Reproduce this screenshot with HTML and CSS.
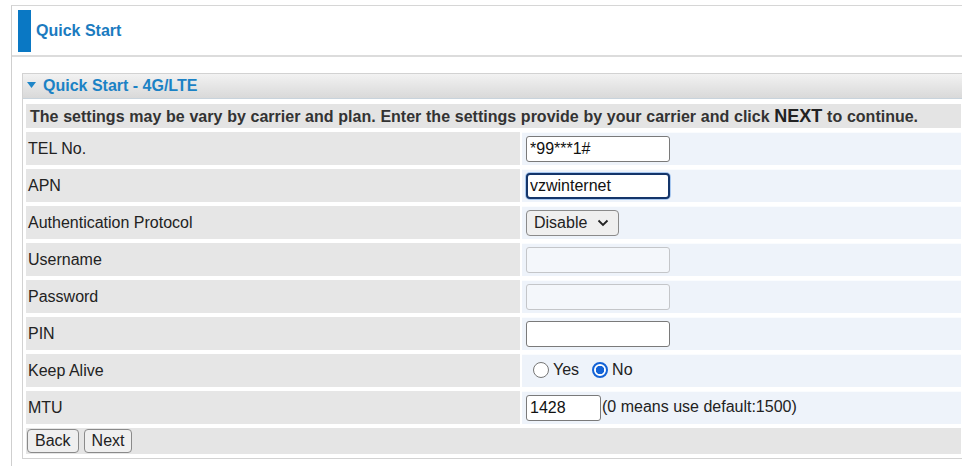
FILE: index.html
```html
<!DOCTYPE html>
<html>
<head>
<meta charset="utf-8">
<link rel="stylesheet" href="styles.css">
</head>
<body>
<div class="page">
  <div class="title">
    <span class="title-bar"></span>
    <span class="title-text">Quick Start</span>
  </div>
  <div class="panel">
    <div class="panel-head">
      <svg class="caret" width="9" height="6" viewBox="0 0 9 6"><path d="M0 0H9L4.5 6Z" fill="#1f86c8"/></svg>
      <span>Quick Start - 4G/LTE</span>
    </div>
    <table class="form">
      <tr class="notice"><td colspan="2">The settings may be vary by carrier and plan. Enter the settings provide by your carrier and click <b class="big">NEXT</b> to continue.</td></tr>
      <tr><td class="lbl">TEL No.</td><td class="val"><input class="txt" type="text" value="*99***1#"></td></tr>
      <tr><td class="lbl">APN</td><td class="val"><input class="txt focus" type="text" value="vzwinternet"></td></tr>
      <tr><td class="lbl">Authentication Protocol</td><td class="val"><span class="select">Disable<svg width="12" height="8" viewBox="0 0 12 8"><path d="M1.5 1.5L6 6L10.5 1.5" fill="none" stroke="#222" stroke-width="1.8"/></svg></span></td></tr>
      <tr><td class="lbl">Username</td><td class="val"><input class="txt" type="text" disabled></td></tr>
      <tr><td class="lbl">Password</td><td class="val"><input class="txt" type="password" disabled></td></tr>
      <tr><td class="lbl">PIN</td><td class="val"><input class="txt" type="text"></td></tr>
      <tr><td class="lbl">Keep Alive</td><td class="val"><label class="radio"><input type="radio" name="ka">Yes</label><label class="radio"><input type="radio" name="ka" checked>No</label></td></tr>
      <tr><td class="lbl">MTU</td><td class="val"><input class="txt mtu" type="text" value="1428">(0 means use default:1500)</td></tr>
      <tr class="actions"><td colspan="2"><button class="btn">Back</button><button class="btn">Next</button></td></tr>
    </table>
  </div>
</div>
</body>
</html>
```
FILE: styles.css
```css
html, body {
  margin: 0;
  padding: 0;
  background: #fff;
  font-family: "Liberation Sans", Arial, sans-serif;
  color: #222;
}
.page {
  margin: 5px 11px 0 11px;
  border-left: 1px solid #cfcfcf;
  border-top: 1px solid #d6d6d6;
  padding: 0 0 10px 10px;
  height: 470px;
  box-sizing: border-box;
}
.title {
  display: flex;
  align-items: center;
  height: 49px;
  border-bottom: 2px solid #dcdcdc;
  margin-left: -10px;
  padding-left: 6px;
}
.title-bar {
  width: 13px;
  height: 42px;
  background: #0a78c4;
  margin-right: 5px;
}
.title-text {
  font-size: 16px;
  font-weight: bold;
  color: #1b7bbf;
}
.panel {
  margin-top: 16px;
  border: 1px solid #d2d2d2;
  border-right: none;
}
.panel-head {
  height: 24px;
  background: linear-gradient(#f2f2f2, #d9d9d9);
  border-bottom: 1px solid #c8d3dc;
  display: flex;
  align-items: center;
  padding-left: 4px;
  font-size: 16px;
  font-weight: bold;
  color: #1b82c5;
}
.caret {
  margin-right: 7px;
  margin-top: -2px;
}
.form {
  border-collapse: separate;
  border-spacing: 2px 4px;
  width: 100%;
  margin: 1px 0 0 1px;
  font-size: 16px;
}
.form td {
  padding: 0;
}
.notice td {
  background: #e4e4e4;
  height: 24px;
  padding-left: 4px;
  font-size: 16px;
  font-weight: bold;
  color: #333;
  word-spacing: 0.3px;
}
.big {
  font-size: 18px;
  color: #222;
}
.lbl {
  width: 492px;
  height: 33px;
  background: #e6e6e6;
  padding-left: 2px !important;
  color: #222;
}
.val {
  background: #eef3fa;
  padding-left: 4px !important;
  border-top: 1px solid #fafcfe;
}
.txt {
  box-sizing: border-box;
  width: 144px;
  height: 26px;
  border: 1px solid #7a7a7a;
  border-radius: 3px;
  padding: 0 3px;
  font: 16px "Liberation Sans", Arial, sans-serif;
  color: #111;
  background: #fff;
  vertical-align: middle;
  margin: 0;
}
.txt:disabled {
  background: #f4f7fb;
  border-color: #c4c6c9;
}
.txt.focus {
  border: 2px solid #14356a;
  border-radius: 4px;
  box-shadow: 0 0 0 1px #a8c8f0;
  padding-left: 2px;
}
.txt.mtu {
  width: 75px;
  margin-right: 1px;
}
.select {
  box-sizing: border-box;
  display: inline-flex;
  align-items: center;
  gap: 10px;
  width: 93px;
  height: 26px;
  padding-left: 7px;
  border: 1px solid #8a8a8a;
  border-radius: 4px;
  background: #efefef;
  vertical-align: middle;
}
.radio {
  display: inline-flex;
  align-items: center;
  margin-left: 3px;
  margin-right: 9px;
}
.radio input {
  appearance: none;
  -webkit-appearance: none;
  box-sizing: border-box;
  width: 16px;
  height: 16px;
  margin: 0 4px 0 4px;
  border: 1px solid #767676;
  border-radius: 50%;
  background: #fff;
}
.radio input:checked {
  border: 2px solid #1463d6;
  background: radial-gradient(circle, #1463d6 0 4px, #fff 4.5px);
}
.radio + .radio {
  margin-left: 0;
}
.actions td {
  background: #e5e5e5;
  height: 26px;
  padding-left: 1px !important;
}
.btn {
  height: 24px;
  padding: 0 7px;
  margin: 0 5px 0 0;
  border: 1px solid #8a8a8a;
  border-radius: 4px;
  background: #efefef;
  font: 16px "Liberation Sans", Arial, sans-serif;
  color: #222;
  vertical-align: middle;
}
```
